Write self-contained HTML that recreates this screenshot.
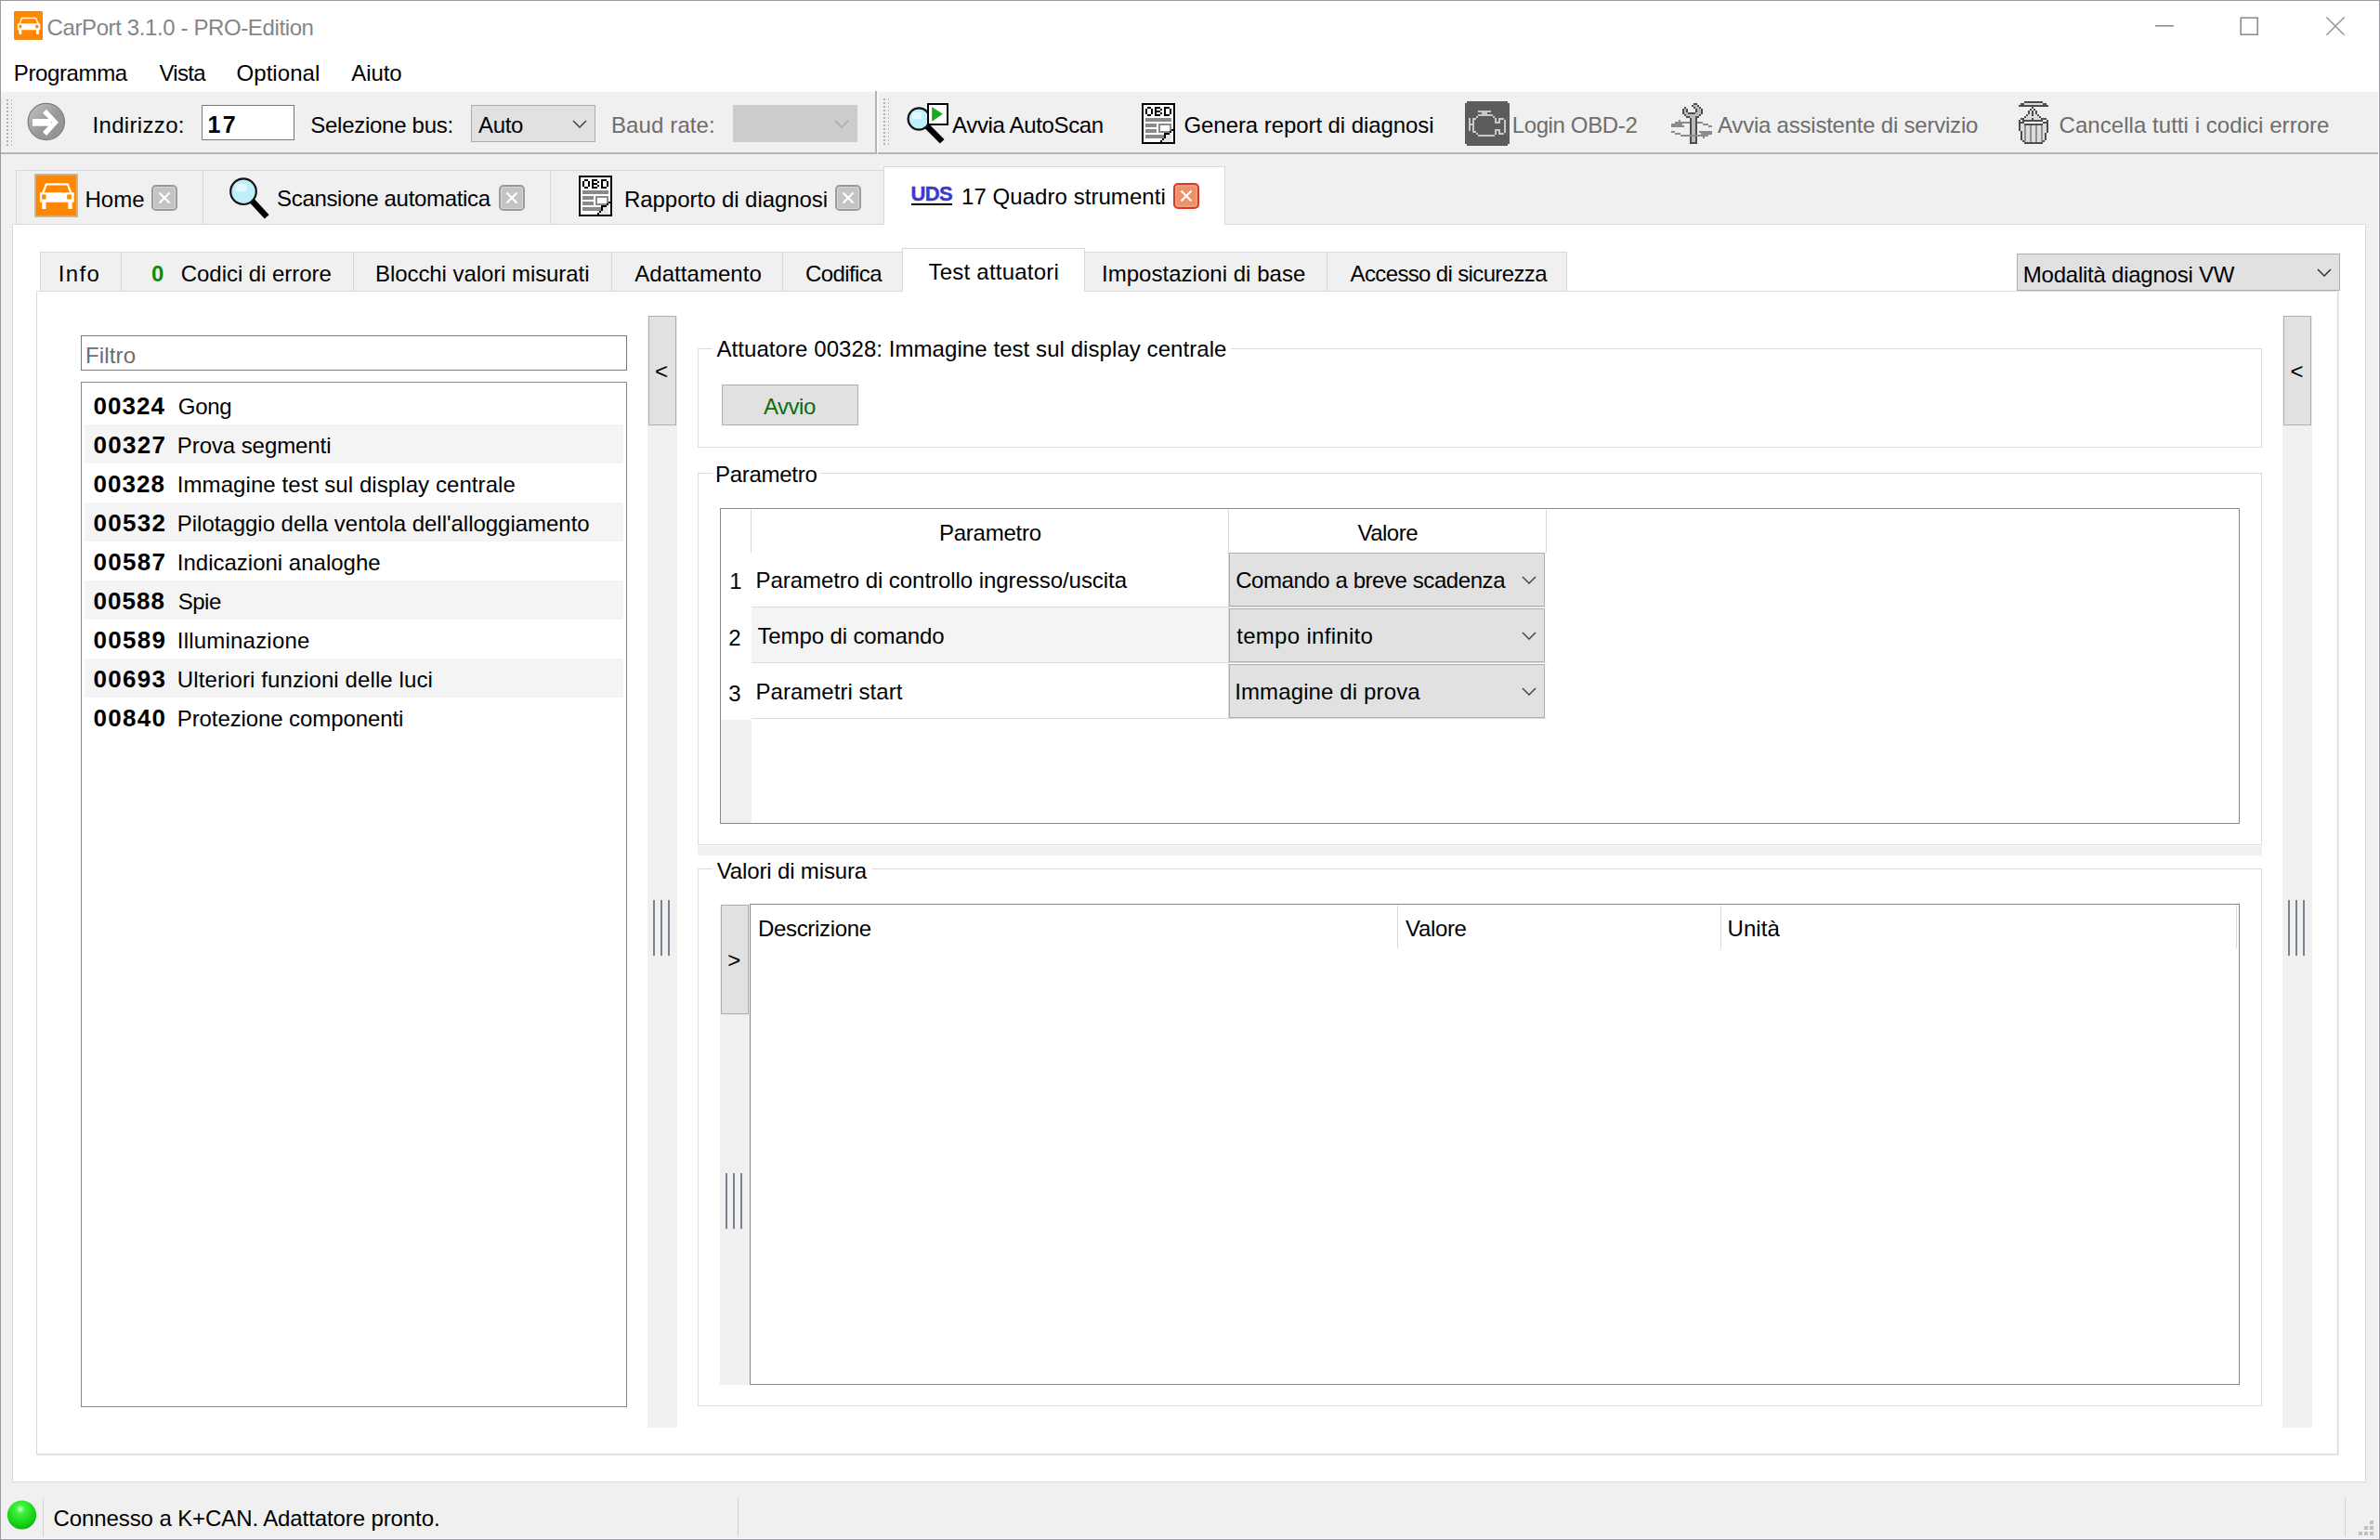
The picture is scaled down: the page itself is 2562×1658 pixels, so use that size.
<!DOCTYPE html>
<html><head><meta charset="utf-8"><title>CarPort</title><style>
html,body{margin:0;padding:0;}
body{width:2562px;height:1658px;position:relative;overflow:hidden;background:#f0f0f0;font-family:"Liberation Sans",sans-serif;}
.b{position:absolute;box-sizing:border-box;}
.t{position:absolute;white-space:pre;line-height:1;font-family:"Liberation Sans",sans-serif;}
svg{position:absolute;}
</style></head><body>
<div class="b" style="left:0px;top:0px;width:2562px;height:1658px;background:#f0f0f0;border-top:1px solid #9b9ba1;border-left:1px solid #9b9ba1;border-right:1px solid #9b9ba1;border-bottom:1px solid #9b9ba1;"></div>
<div class="b" style="left:1px;top:1px;width:2560px;height:97px;background:#fff;"></div>
<svg style="position:absolute;left:2310px;top:10px" width="230" height="36" viewBox="0 0 230 36"><line x1="10" y1="17.8" x2="30" y2="17.8" stroke="#8f8f8f" stroke-width="1.6"/><rect x="102.2" y="9.2" width="18" height="18" fill="none" stroke="#8f8f8f" stroke-width="1.6"/><path d="M194.4,8.5 L213.6,27.7 M213.6,8.5 L194.4,27.7" stroke="#999" stroke-width="1.6"/></svg>
<svg style="position:absolute;left:15px;top:12px" width="31" height="31" viewBox="0 0 46 46">
<rect x="0.8" y="0.8" width="44.4" height="44.4" fill="#ff8800" stroke="#e08a30" stroke-width="1.6" rx="1.5"/>
<path d="M11.8,10 L35.8,10 L39.5,19.8 L41.8,19.8 L41.8,30 L39.8,30 L39.8,37.2 L35.6,37.2 L35.6,30 L12.2,30 L12.2,37.2 L8,37.2 L8,30 L5.8,30 L5.8,19.8 L8.2,19.8 Z" fill="#fff"/>
<path d="M13.2,12.2 L34.4,12.2 L37.2,19.8 L10.5,19.8 Z" fill="#ff8800"/>
<rect x="8" y="22" width="4.2" height="5" fill="#ff8800"/>
<rect x="34.5" y="22" width="4.5" height="5" fill="#ff8800"/>
</svg>
<div class="b" style="left:1px;top:98px;width:943px;height:68px;background:#f0f0f0;"></div>
<div class="b" style="left:1px;top:98px;width:941px;height:1px;background:#fafafa;"></div>
<div class="b" style="left:942px;top:98px;width:2px;height:68px;background:#b4b4b4;"></div>
<div class="b" style="left:1px;top:164px;width:943px;height:2px;background:#b4b4b4;"></div>
<div class="b" style="left:944px;top:98px;width:1617px;height:68px;background:#f0f0f0;"></div>
<div class="b" style="left:944px;top:98px;width:1617px;height:1px;background:#fafafa;"></div>
<div class="b" style="left:944px;top:98px;width:2px;height:66px;background:#fafafa;"></div>
<div class="b" style="left:945px;top:164px;width:1616px;height:2px;background:#b4b4b4;"></div>
<div class="b" style="left:7px;top:107px;width:2px;height:2px;background:#b2b2b2"></div><div class="b" style="left:12px;top:107px;width:1px;height:2px;background:#bdbdbd"></div><div class="b" style="left:7px;top:111px;width:2px;height:2px;background:#b2b2b2"></div><div class="b" style="left:12px;top:111px;width:1px;height:2px;background:#bdbdbd"></div><div class="b" style="left:7px;top:115px;width:2px;height:2px;background:#b2b2b2"></div><div class="b" style="left:12px;top:115px;width:1px;height:2px;background:#bdbdbd"></div><div class="b" style="left:7px;top:119px;width:2px;height:2px;background:#b2b2b2"></div><div class="b" style="left:12px;top:119px;width:1px;height:2px;background:#bdbdbd"></div><div class="b" style="left:7px;top:123px;width:2px;height:2px;background:#b2b2b2"></div><div class="b" style="left:12px;top:123px;width:1px;height:2px;background:#bdbdbd"></div><div class="b" style="left:7px;top:127px;width:2px;height:2px;background:#b2b2b2"></div><div class="b" style="left:12px;top:127px;width:1px;height:2px;background:#bdbdbd"></div><div class="b" style="left:7px;top:131px;width:2px;height:2px;background:#b2b2b2"></div><div class="b" style="left:12px;top:131px;width:1px;height:2px;background:#bdbdbd"></div><div class="b" style="left:7px;top:135px;width:2px;height:2px;background:#b2b2b2"></div><div class="b" style="left:12px;top:135px;width:1px;height:2px;background:#bdbdbd"></div><div class="b" style="left:7px;top:139px;width:2px;height:2px;background:#b2b2b2"></div><div class="b" style="left:12px;top:139px;width:1px;height:2px;background:#bdbdbd"></div><div class="b" style="left:7px;top:143px;width:2px;height:2px;background:#b2b2b2"></div><div class="b" style="left:12px;top:143px;width:1px;height:2px;background:#bdbdbd"></div><div class="b" style="left:7px;top:147px;width:2px;height:2px;background:#b2b2b2"></div><div class="b" style="left:12px;top:147px;width:1px;height:2px;background:#bdbdbd"></div><div class="b" style="left:7px;top:151px;width:2px;height:2px;background:#b2b2b2"></div><div class="b" style="left:12px;top:151px;width:1px;height:2px;background:#bdbdbd"></div><div class="b" style="left:7px;top:155px;width:2px;height:2px;background:#b2b2b2"></div><div class="b" style="left:12px;top:155px;width:1px;height:2px;background:#bdbdbd"></div>
<div class="b" style="left:951px;top:106px;width:2px;height:2px;background:#b2b2b2"></div><div class="b" style="left:956px;top:106px;width:1px;height:2px;background:#bdbdbd"></div><div class="b" style="left:951px;top:110px;width:2px;height:2px;background:#b2b2b2"></div><div class="b" style="left:956px;top:110px;width:1px;height:2px;background:#bdbdbd"></div><div class="b" style="left:951px;top:114px;width:2px;height:2px;background:#b2b2b2"></div><div class="b" style="left:956px;top:114px;width:1px;height:2px;background:#bdbdbd"></div><div class="b" style="left:951px;top:118px;width:2px;height:2px;background:#b2b2b2"></div><div class="b" style="left:956px;top:118px;width:1px;height:2px;background:#bdbdbd"></div><div class="b" style="left:951px;top:122px;width:2px;height:2px;background:#b2b2b2"></div><div class="b" style="left:956px;top:122px;width:1px;height:2px;background:#bdbdbd"></div><div class="b" style="left:951px;top:126px;width:2px;height:2px;background:#b2b2b2"></div><div class="b" style="left:956px;top:126px;width:1px;height:2px;background:#bdbdbd"></div><div class="b" style="left:951px;top:130px;width:2px;height:2px;background:#b2b2b2"></div><div class="b" style="left:956px;top:130px;width:1px;height:2px;background:#bdbdbd"></div><div class="b" style="left:951px;top:134px;width:2px;height:2px;background:#b2b2b2"></div><div class="b" style="left:956px;top:134px;width:1px;height:2px;background:#bdbdbd"></div><div class="b" style="left:951px;top:138px;width:2px;height:2px;background:#b2b2b2"></div><div class="b" style="left:956px;top:138px;width:1px;height:2px;background:#bdbdbd"></div><div class="b" style="left:951px;top:142px;width:2px;height:2px;background:#b2b2b2"></div><div class="b" style="left:956px;top:142px;width:1px;height:2px;background:#bdbdbd"></div><div class="b" style="left:951px;top:146px;width:2px;height:2px;background:#b2b2b2"></div><div class="b" style="left:956px;top:146px;width:1px;height:2px;background:#bdbdbd"></div><div class="b" style="left:951px;top:150px;width:2px;height:2px;background:#b2b2b2"></div><div class="b" style="left:956px;top:150px;width:1px;height:2px;background:#bdbdbd"></div><div class="b" style="left:951px;top:154px;width:2px;height:2px;background:#b2b2b2"></div><div class="b" style="left:956px;top:154px;width:1px;height:2px;background:#bdbdbd"></div>
<svg style="position:absolute;left:25px;top:105px" width="50" height="50" viewBox="0 0 50 50">
<defs><linearGradient id="ag" x1="0" y1="0" x2="1" y2="1"><stop offset="0" stop-color="#c4c4c4"/><stop offset="0.55" stop-color="#989898"/><stop offset="1" stop-color="#939393"/></linearGradient></defs>
<circle cx="24.8" cy="26" r="19.6" fill="url(#ag)" stroke="#7e7e7e" stroke-width="1.3"/>
<rect x="10" y="23" width="20" height="7.7" fill="#fff"/>
<path d="M21,16.6 L25,12.7 L38,26.8 L25,41.1 L21,37 L31,26.8 Z" fill="#fff"/>
</svg>
<div class="b" style="left:217px;top:113px;width:100px;height:38px;background:#fff;border-top:1px solid #7a7a7a;border-left:1px solid #7a7a7a;border-right:1px solid #7a7a7a;border-bottom:1px solid #7a7a7a;"></div>
<div class="b" style="left:507px;top:113px;width:134px;height:40px;background:#e1e1e1;border-top:1px solid #adadad;border-left:1px solid #adadad;border-right:1px solid #adadad;border-bottom:1px solid #adadad;"></div>
<svg style="position:absolute;left:616px;top:129px" width="16" height="9" viewBox="0 0 16 9"><path d="M1,1 L8.0,8 L15,1" fill="none" stroke="#444" stroke-width="1.5"/></svg>
<div class="b" style="left:789px;top:113px;width:134px;height:40px;background:#cccccc;border-top:1px solid #cccccc;border-left:1px solid #cccccc;border-right:1px solid #cccccc;border-bottom:1px solid #cccccc;"></div>
<svg style="position:absolute;left:898px;top:129px" width="16" height="9" viewBox="0 0 16 9"><path d="M1,1 L8.0,8 L15,1" fill="none" stroke="#a9a9a9" stroke-width="1.5"/></svg>
<div style="position:absolute;left:970px;top:105px;width:55px;height:55px"><svg style="position:absolute;left:0px;top:0px" width="55" height="55" viewBox="0 0 55 55">
<line x1="28" y1="31" x2="44.2" y2="47.2" stroke="#000" stroke-width="6.5" stroke-linecap="butt"/>
<circle cx="19.2" cy="23" r="11.6" fill="#bdeefa" stroke="#111" stroke-width="2.2"/>
<rect x="12.239999999999998" y="16.04" width="9.86" height="6.96" fill="#e2f8fd"/>
</svg><svg style="position:absolute;left:0;top:0" width="55" height="55" viewBox="0 0 55 55" shape-rendering="crispEdges"><rect x="28.9" y="7" width="20.8" height="21.6" fill="#fff" stroke="#000" stroke-width="2"/><path d="M33.2,10 L44.8,17.8 L33.2,25.7 Z" fill="#1aab24" shape-rendering="geometricPrecision"/></svg></div>
<svg style="position:absolute;left:1229px;top:111px" width="36" height="44" viewBox="0 0 18 22" shape-rendering="crispEdges"><rect x="0" y="0" width="18" height="22" fill="#fff"/><rect x="2" y="8" width="14" height="2" fill="#8a8a8a"/><rect x="2" y="11" width="6" height="2" fill="#8a8a8a"/><rect x="2" y="14" width="6" height="2" fill="#8a8a8a"/><rect x="2" y="17" width="10" height="2" fill="#8a8a8a"/><rect x="9" y="11" width="7" height="1" fill="#8a8a8a"/><rect x="9" y="15" width="7" height="1" fill="#8a8a8a"/><rect x="9" y="11" width="1" height="5" fill="#8a8a8a"/><rect x="15" y="11" width="1" height="5" fill="#8a8a8a"/><rect x="13" y="16" width="3" height="1" fill="#e6e6e6"/><rect x="12" y="17" width="4" height="1" fill="#e6e6e6"/><rect x="12" y="18" width="4" height="1" fill="#e6e6e6"/><rect x="12" y="19" width="4" height="1" fill="#e6e6e6"/><rect x="11" y="20" width="5" height="1" fill="#e6e6e6"/><rect x="0" y="0" width="18" height="1" fill="#000"/><rect x="0" y="21" width="18" height="1" fill="#000"/><rect x="0" y="0" width="1" height="22" fill="#000"/><rect x="17" y="0" width="1" height="22" fill="#000"/><rect x="3" y="2" width="2" height="1" fill="#000"/><rect x="2" y="3" width="1" height="3" fill="#000"/><rect x="5" y="3" width="1" height="3" fill="#000"/><rect x="3" y="6" width="2" height="1" fill="#000"/><rect x="7" y="2" width="3" height="1" fill="#000"/><rect x="7" y="3" width="1" height="3" fill="#000"/><rect x="10" y="3" width="1" height="1" fill="#000"/><rect x="7" y="4" width="3" height="1" fill="#000"/><rect x="10" y="5" width="1" height="1" fill="#000"/><rect x="7" y="6" width="3" height="1" fill="#000"/><rect x="12" y="2" width="3" height="1" fill="#000"/><rect x="12" y="3" width="1" height="3" fill="#000"/><rect x="15" y="3" width="1" height="3" fill="#000"/><rect x="12" y="6" width="3" height="1" fill="#000"/><rect x="16" y="14" width="1" height="1" fill="#000"/><rect x="15" y="15" width="1" height="1" fill="#000"/><rect x="13" y="16" width="2" height="1" fill="#000"/><rect x="12" y="16" width="1" height="3" fill="#000"/><rect x="11" y="19" width="1" height="1" fill="#000"/><rect x="10" y="20" width="1" height="2" fill="#000"/></svg>
<svg style="position:absolute;left:1577px;top:109px" width="48" height="48" viewBox="0 0 24 24" shape-rendering="crispEdges"><path d="M1,0 H23 V1 H24 V23 H23 V24 H1 V23 H0 V1 H1 Z" fill="#5c5c5c"/><rect x="7" y="5" width="7" height="1" fill="#c8c8c8"/><rect x="9" y="6" width="3" height="1" fill="#c8c8c8"/><rect x="7" y="7" width="8" height="1" fill="#c8c8c8"/><rect x="6" y="8" width="1" height="1" fill="#c8c8c8"/><rect x="5" y="9" width="1" height="1" fill="#c8c8c8"/><rect x="4" y="9" width="1" height="8" fill="#c8c8c8"/><rect x="5" y="16" width="1" height="1" fill="#c8c8c8"/><rect x="6" y="17" width="1" height="1" fill="#c8c8c8"/><rect x="2" y="9" width="1" height="7" fill="#c8c8c8"/><rect x="3" y="12" width="1" height="1" fill="#c8c8c8"/><rect x="7" y="18" width="9" height="1" fill="#c8c8c8"/><rect x="15" y="8" width="1" height="1" fill="#c8c8c8"/><rect x="16" y="9" width="1" height="3" fill="#c8c8c8"/><rect x="16" y="11" width="3" height="1" fill="#c8c8c8"/><rect x="18" y="9" width="1" height="3" fill="#c8c8c8"/><rect x="18" y="9" width="3" height="1" fill="#c8c8c8"/><rect x="21" y="10" width="1" height="7" fill="#c8c8c8"/><rect x="16" y="15" width="3" height="1" fill="#c8c8c8"/><rect x="16" y="15" width="1" height="3" fill="#c8c8c8"/><rect x="18" y="15" width="1" height="3" fill="#c8c8c8"/><rect x="18" y="17" width="3" height="1" fill="#c8c8c8"/></svg>
<svg style="position:absolute;left:1799px;top:111px" width="44" height="44" viewBox="0 0 22 22" shape-rendering="crispEdges"><rect x="12" y="1" width="2" height="1" fill="#bababa"/><rect x="13" y="2" width="2" height="1" fill="#bababa"/><rect x="7" y="3" width="1" height="2" fill="#bababa"/><rect x="14" y="3" width="2" height="2" fill="#bababa"/><rect x="7" y="5" width="2" height="1" fill="#bababa"/><rect x="13" y="5" width="3" height="1" fill="#bababa"/><rect x="8" y="6" width="7" height="1" fill="#bababa"/><rect x="10" y="7" width="3" height="1" fill="#bababa"/><rect x="11" y="8" width="2" height="13" fill="#bababa"/><rect x="12" y="0" width="2" height="1" fill="#4d4d4d"/><rect x="11" y="1" width="1" height="1" fill="#4d4d4d"/><rect x="14" y="1" width="1" height="1" fill="#4d4d4d"/><rect x="7" y="2" width="1" height="1" fill="#4d4d4d"/><rect x="12" y="2" width="1" height="1" fill="#4d4d4d"/><rect x="15" y="2" width="1" height="1" fill="#4d4d4d"/><rect x="6" y="3" width="1" height="2" fill="#4d4d4d"/><rect x="8" y="3" width="1" height="2" fill="#4d4d4d"/><rect x="13" y="3" width="1" height="2" fill="#4d4d4d"/><rect x="16" y="3" width="1" height="3" fill="#4d4d4d"/><rect x="6" y="5" width="1" height="1" fill="#4d4d4d"/><rect x="9" y="5" width="4" height="1" fill="#4d4d4d"/><rect x="7" y="6" width="1" height="1" fill="#4d4d4d"/><rect x="15" y="6" width="1" height="1" fill="#4d4d4d"/><rect x="8" y="7" width="2" height="1" fill="#4d4d4d"/><rect x="13" y="7" width="2" height="1" fill="#4d4d4d"/><rect x="10" y="8" width="1" height="13" fill="#4d4d4d"/><rect x="13" y="8" width="1" height="13" fill="#4d4d4d"/><rect x="10" y="21" width="4" height="1" fill="#4d4d4d"/><rect x="4" y="9" width="1" height="1" fill="#8c8c8c"/><rect x="2" y="10" width="8" height="1" fill="#8c8c8c"/><rect x="14" y="10" width="3" height="1" fill="#8c8c8c"/><rect x="0" y="11" width="6" height="1" fill="#8c8c8c"/><rect x="17" y="11" width="3" height="1" fill="#8c8c8c"/><rect x="0" y="12" width="7" height="1" fill="#8c8c8c"/><rect x="20" y="12" width="2" height="1" fill="#8c8c8c"/><rect x="0" y="15" width="2" height="1" fill="#8c8c8c"/><rect x="15" y="15" width="7" height="1" fill="#8c8c8c"/><rect x="2" y="16" width="3" height="1" fill="#8c8c8c"/><rect x="16" y="16" width="6" height="1" fill="#8c8c8c"/><rect x="5" y="17" width="15" height="1" fill="#8c8c8c"/><rect x="17" y="18" width="1" height="1" fill="#8c8c8c"/></svg>
<svg style="position:absolute;left:2173px;top:109px" width="32" height="46" viewBox="0 0 16 23" shape-rendering="crispEdges"><rect x="3" y="1" width="10" height="1" fill="#dcdcdc"/><rect x="6" y="5" width="1" height="2" fill="#dcdcdc"/><rect x="8" y="5" width="1" height="2" fill="#dcdcdc"/><rect x="5" y="7" width="2" height="1" fill="#dcdcdc"/><rect x="8" y="7" width="2" height="1" fill="#dcdcdc"/><rect x="4" y="8" width="7" height="1" fill="#dcdcdc"/><rect x="3" y="9" width="4" height="1" fill="#dcdcdc"/><rect x="8" y="9" width="4" height="1" fill="#dcdcdc"/><rect x="1" y="12" width="2" height="1" fill="#dcdcdc"/><rect x="13" y="12" width="2" height="1" fill="#dcdcdc"/><rect x="1" y="13" width="14" height="8" fill="#dcdcdc"/><rect x="2" y="21" width="11" height="1" fill="#dcdcdc"/><rect x="7" y="4" width="1" height="1" fill="#ffffff"/><rect x="1" y="10" width="1" height="1" fill="#ffffff"/><rect x="13" y="10" width="2" height="1" fill="#ffffff"/><rect x="3" y="11" width="10" height="1" fill="#ffffff"/><rect x="3" y="13" width="1" height="9" fill="#909090"/><rect x="6" y="13" width="1" height="9" fill="#909090"/><rect x="9" y="13" width="1" height="9" fill="#909090"/><rect x="12" y="13" width="1" height="9" fill="#909090"/><rect x="3" y="0" width="10" height="1" fill="#4d4d4d"/><rect x="1" y="1" width="2" height="1" fill="#4d4d4d"/><rect x="13" y="1" width="2" height="1" fill="#4d4d4d"/><rect x="0" y="2" width="16" height="1" fill="#4d4d4d"/><rect x="7" y="3" width="1" height="1" fill="#4d4d4d"/><rect x="6" y="4" width="1" height="1" fill="#4d4d4d"/><rect x="8" y="4" width="1" height="1" fill="#4d4d4d"/><rect x="5" y="5" width="1" height="2" fill="#4d4d4d"/><rect x="7" y="5" width="1" height="3" fill="#4d4d4d"/><rect x="9" y="5" width="1" height="2" fill="#4d4d4d"/><rect x="4" y="7" width="1" height="1" fill="#4d4d4d"/><rect x="10" y="7" width="1" height="1" fill="#4d4d4d"/><rect x="3" y="8" width="1" height="1" fill="#4d4d4d"/><rect x="11" y="8" width="1" height="1" fill="#4d4d4d"/><rect x="1" y="9" width="2" height="1" fill="#4d4d4d"/><rect x="7" y="9" width="1" height="1" fill="#4d4d4d"/><rect x="12" y="9" width="3" height="1" fill="#4d4d4d"/><rect x="0" y="10" width="1" height="6" fill="#4d4d4d"/><rect x="2" y="10" width="11" height="1" fill="#4d4d4d"/><rect x="15" y="10" width="1" height="7" fill="#4d4d4d"/><rect x="1" y="11" width="2" height="1" fill="#4d4d4d"/><rect x="13" y="11" width="3" height="1" fill="#4d4d4d"/><rect x="3" y="12" width="10" height="1" fill="#4d4d4d"/><rect x="1" y="16" width="1" height="5" fill="#4d4d4d"/><rect x="14" y="17" width="1" height="4" fill="#4d4d4d"/><rect x="2" y="21" width="1" height="1" fill="#4d4d4d"/><rect x="13" y="21" width="1" height="1" fill="#4d4d4d"/><rect x="3" y="22" width="10" height="1" fill="#4d4d4d"/></svg>
<div class="b" style="left:17px;top:183px;width:934px;height:1px;background:#d9d9d9;"></div>
<div class="b" style="left:17px;top:183px;width:1px;height:59px;background:#d9d9d9;"></div>
<div class="b" style="left:218px;top:184px;width:1px;height:58px;background:#d9d9d9;"></div>
<div class="b" style="left:592px;top:184px;width:1px;height:58px;background:#d9d9d9;"></div>
<div class="b" style="left:13px;top:241px;width:2534px;height:1355px;background:#fff;border-top:1px solid #d9d9d9;border-left:1px solid #d9d9d9;border-right:1px solid #d9d9d9;border-bottom:1px solid #d9d9d9;"></div>
<div class="b" style="left:951px;top:179px;width:368px;height:63px;background:#fff;border-top:1px solid #d9d9d9;border-left:1px solid #d9d9d9;border-right:1px solid #d9d9d9;"></div>
<div class="b" style="left:952px;top:241px;width:366px;height:2px;background:#fff;"></div>
<svg style="position:absolute;left:37px;top:187px" width="47" height="47" viewBox="0 0 46 46">
<rect x="0.8" y="0.8" width="44.4" height="44.4" fill="#ff8800" stroke="#cdb9a0" stroke-width="1.6" />
<path d="M11.8,10 L35.8,10 L39.5,19.8 L41.8,19.8 L41.8,30 L39.8,30 L39.8,37.2 L35.6,37.2 L35.6,30 L12.2,30 L12.2,37.2 L8,37.2 L8,30 L5.8,30 L5.8,19.8 L8.2,19.8 Z" fill="#fff"/>
<path d="M13.2,12.2 L34.4,12.2 L37.2,19.8 L10.5,19.8 Z" fill="#ff8800"/>
<rect x="8" y="22" width="4.2" height="5" fill="#ff8800"/>
<rect x="34.5" y="22" width="4.5" height="5" fill="#ff8800"/>
</svg>
<svg style="position:absolute;left:240px;top:186px" width="54" height="54" viewBox="0 0 54 54">
<line x1="32" y1="31" x2="45" y2="45" stroke="#000" stroke-width="6.5" stroke-linecap="square"/>
<circle cx="22" cy="20.2" r="13.8" fill="#bdeefa" stroke="#111" stroke-width="2.2"/>
<rect x="13.72" y="11.92" width="11.73" height="8.28" fill="#e2f8fd"/>
</svg>
<svg style="position:absolute;left:623px;top:189px" width="36" height="44" viewBox="0 0 18 22" shape-rendering="crispEdges"><rect x="0" y="0" width="18" height="22" fill="#fff"/><rect x="2" y="8" width="14" height="2" fill="#8a8a8a"/><rect x="2" y="11" width="6" height="2" fill="#8a8a8a"/><rect x="2" y="14" width="6" height="2" fill="#8a8a8a"/><rect x="2" y="17" width="10" height="2" fill="#8a8a8a"/><rect x="9" y="11" width="7" height="1" fill="#8a8a8a"/><rect x="9" y="15" width="7" height="1" fill="#8a8a8a"/><rect x="9" y="11" width="1" height="5" fill="#8a8a8a"/><rect x="15" y="11" width="1" height="5" fill="#8a8a8a"/><rect x="13" y="16" width="3" height="1" fill="#e6e6e6"/><rect x="12" y="17" width="4" height="1" fill="#e6e6e6"/><rect x="12" y="18" width="4" height="1" fill="#e6e6e6"/><rect x="12" y="19" width="4" height="1" fill="#e6e6e6"/><rect x="11" y="20" width="5" height="1" fill="#e6e6e6"/><rect x="0" y="0" width="18" height="1" fill="#000"/><rect x="0" y="21" width="18" height="1" fill="#000"/><rect x="0" y="0" width="1" height="22" fill="#000"/><rect x="17" y="0" width="1" height="22" fill="#000"/><rect x="3" y="2" width="2" height="1" fill="#000"/><rect x="2" y="3" width="1" height="3" fill="#000"/><rect x="5" y="3" width="1" height="3" fill="#000"/><rect x="3" y="6" width="2" height="1" fill="#000"/><rect x="7" y="2" width="3" height="1" fill="#000"/><rect x="7" y="3" width="1" height="3" fill="#000"/><rect x="10" y="3" width="1" height="1" fill="#000"/><rect x="7" y="4" width="3" height="1" fill="#000"/><rect x="10" y="5" width="1" height="1" fill="#000"/><rect x="7" y="6" width="3" height="1" fill="#000"/><rect x="12" y="2" width="3" height="1" fill="#000"/><rect x="12" y="3" width="1" height="3" fill="#000"/><rect x="15" y="3" width="1" height="3" fill="#000"/><rect x="12" y="6" width="3" height="1" fill="#000"/><rect x="16" y="14" width="1" height="1" fill="#000"/><rect x="15" y="15" width="1" height="1" fill="#000"/><rect x="13" y="16" width="2" height="1" fill="#000"/><rect x="12" y="16" width="1" height="3" fill="#000"/><rect x="11" y="19" width="1" height="1" fill="#000"/><rect x="10" y="20" width="1" height="2" fill="#000"/></svg>
<svg style="position:absolute;left:163px;top:199px" width="28" height="28" viewBox="0 0 28 28">
<rect x="1" y="1" width="26" height="26" rx="4" fill="#c4c4c4" stroke="#999" stroke-width="2"/>
<rect x="2.5" y="2.5" width="23" height="23" rx="2.5" fill="none" stroke="#d4d4d4" stroke-width="1.2"/>
<path d="M8.5,8.5 L19.5,19.5 M19.5,8.5 L8.5,19.5" stroke="#fff" stroke-width="2.2"/>
</svg>
<svg style="position:absolute;left:537px;top:199px" width="28" height="28" viewBox="0 0 28 28">
<rect x="1" y="1" width="26" height="26" rx="4" fill="#c4c4c4" stroke="#999" stroke-width="2"/>
<rect x="2.5" y="2.5" width="23" height="23" rx="2.5" fill="none" stroke="#d4d4d4" stroke-width="1.2"/>
<path d="M8.5,8.5 L19.5,19.5 M19.5,8.5 L8.5,19.5" stroke="#fff" stroke-width="2.2"/>
</svg>
<svg style="position:absolute;left:899px;top:199px" width="28" height="28" viewBox="0 0 28 28">
<rect x="1" y="1" width="26" height="26" rx="4" fill="#c4c4c4" stroke="#999" stroke-width="2"/>
<rect x="2.5" y="2.5" width="23" height="23" rx="2.5" fill="none" stroke="#d4d4d4" stroke-width="1.2"/>
<path d="M8.5,8.5 L19.5,19.5 M19.5,8.5 L8.5,19.5" stroke="#fff" stroke-width="2.2"/>
</svg>
<svg style="position:absolute;left:1263px;top:197px" width="28" height="28" viewBox="0 0 28 28">
<rect x="1" y="1" width="26" height="26" rx="4" fill="#ee9068" stroke="#d8392b" stroke-width="2"/>
<rect x="3" y="3" width="22" height="22" rx="2" fill="none" stroke="#f2ae90" stroke-width="1"/>
<path d="M8.5,8.5 L19.5,19.5 M19.5,8.5 L8.5,19.5" stroke="#fff" stroke-width="2.2"/>
</svg>
<div class="t" style="left:980.5px;top:197.6px;font-size:22px;font-weight:700;color:#3a3ad0;letter-spacing:-0.6px;-webkit-text-stroke:0.4px #3a3ad0">UDS</div>
<div class="b" style="left:981px;top:219px;width:44px;height:2px;background:#000;"></div>
<div class="b" style="left:43px;top:271px;width:1644px;height:43px;background:#f0f0f0;"></div>
<div class="b" style="left:43px;top:271px;width:1644px;height:1px;background:#d9d9d9;"></div>
<div class="b" style="left:43px;top:271px;width:1px;height:43px;background:#d9d9d9;"></div>
<div class="b" style="left:130px;top:272px;width:1px;height:42px;background:#d9d9d9;"></div>
<div class="b" style="left:380px;top:272px;width:1px;height:42px;background:#d9d9d9;"></div>
<div class="b" style="left:658px;top:272px;width:1px;height:42px;background:#d9d9d9;"></div>
<div class="b" style="left:842px;top:272px;width:1px;height:42px;background:#d9d9d9;"></div>
<div class="b" style="left:1428px;top:272px;width:1px;height:42px;background:#d9d9d9;"></div>
<div class="b" style="left:1686px;top:272px;width:1px;height:42px;background:#d9d9d9;"></div>
<div class="b" style="left:39px;top:313px;width:2478px;height:1253px;background:#fff;border-top:1px solid #d9d9d9;border-left:1px solid #d9d9d9;border-right:1px solid #d9d9d9;border-bottom:1px solid #d9d9d9;"></div>
<div class="b" style="left:2517px;top:314px;width:1px;height:1253px;background:#ececec;"></div>
<div class="b" style="left:40px;top:1566px;width:2478px;height:1px;background:#ececec;"></div>
<div class="b" style="left:971px;top:267px;width:197px;height:47px;background:#fff;border-top:1px solid #d9d9d9;border-left:1px solid #d9d9d9;border-right:1px solid #d9d9d9;"></div>
<div class="b" style="left:972px;top:313px;width:195px;height:2px;background:#fff;"></div>
<div class="b" style="left:2171px;top:273px;width:348px;height:40px;background:#e1e1e1;border-top:1px solid #adadad;border-left:1px solid #adadad;border-right:1px solid #adadad;border-bottom:1px solid #adadad;"></div>
<svg style="position:absolute;left:2494px;top:289px" width="16" height="9" viewBox="0 0 16 9"><path d="M1,1 L8.0,8 L15,1" fill="none" stroke="#333" stroke-width="1.5"/></svg>
<div class="b" style="left:87px;top:361px;width:588px;height:38px;background:#fff;border-top:1px solid #7a7a7a;border-left:1px solid #7a7a7a;border-right:1px solid #7a7a7a;border-bottom:1px solid #7a7a7a;"></div>
<div class="b" style="left:87px;top:411px;width:588px;height:1104px;background:#fff;border-top:1px solid #828790;border-left:1px solid #828790;border-right:1px solid #828790;border-bottom:1px solid #828790;"></div>
<div class="b" style="left:91px;top:457px;width:580px;height:42px;background:#f4f4f4;"></div>
<div class="b" style="left:91px;top:541px;width:580px;height:42px;background:#f4f4f4;"></div>
<div class="b" style="left:91px;top:625px;width:580px;height:42px;background:#f4f4f4;"></div>
<div class="b" style="left:91px;top:709px;width:580px;height:42px;background:#f4f4f4;"></div>
<div class="b" style="left:697px;top:340px;width:32px;height:1197px;background:#f0f0f0;"></div>
<div class="b" style="left:698px;top:340px;width:30px;height:118px;background:#e1e1e1;border-top:1px solid #adadad;border-left:1px solid #adadad;border-right:1px solid #adadad;border-bottom:1px solid #adadad;"></div>
<div class="b" style="left:2457px;top:340px;width:32px;height:1197px;background:#f0f0f0;"></div>
<div class="b" style="left:2458px;top:340px;width:30px;height:118px;background:#e1e1e1;border-top:1px solid #adadad;border-left:1px solid #adadad;border-right:1px solid #adadad;border-bottom:1px solid #adadad;"></div>
<div class="b" style="left:703px;top:969px;width:2px;height:60px;background:#7b8290;"></div>
<div class="b" style="left:711px;top:969px;width:2px;height:60px;background:#7b8290;"></div>
<div class="b" style="left:719px;top:969px;width:2px;height:60px;background:#7b8290;"></div>
<div class="b" style="left:2463px;top:969px;width:2px;height:60px;background:#7b8290;"></div>
<div class="b" style="left:2471px;top:969px;width:2px;height:60px;background:#7b8290;"></div>
<div class="b" style="left:2479px;top:969px;width:2px;height:60px;background:#7b8290;"></div>
<div class="b" style="left:751px;top:375px;width:1684px;height:107px;background:#fff;border-top:1px solid #dcdcdc;border-left:1px solid #dcdcdc;border-right:1px solid #dcdcdc;border-bottom:1px solid #dcdcdc;"></div>
<div class="b" style="left:767px;top:375px;width:558px;height:1px;background:#fff;"></div>
<div class="b" style="left:751px;top:509px;width:1684px;height:401px;background:#fff;border-top:1px solid #dcdcdc;border-left:1px solid #dcdcdc;border-right:1px solid #dcdcdc;border-bottom:1px solid #dcdcdc;"></div>
<div class="b" style="left:767px;top:509px;width:116px;height:1px;background:#fff;"></div>
<div class="b" style="left:751px;top:911px;width:1684px;height:10px;background:#f0f0f0;"></div>
<div class="b" style="left:751px;top:935px;width:1684px;height:579px;background:#fff;border-top:1px solid #dcdcdc;border-left:1px solid #dcdcdc;border-right:1px solid #dcdcdc;border-bottom:1px solid #dcdcdc;"></div>
<div class="b" style="left:767px;top:935px;width:172px;height:1px;background:#fff;"></div>
<div class="b" style="left:777px;top:414px;width:147px;height:44px;background:#e1e1e1;border-top:1px solid #adadad;border-left:1px solid #adadad;border-right:1px solid #adadad;border-bottom:1px solid #adadad;"></div>
<div class="b" style="left:775px;top:547px;width:1636px;height:340px;background:#fff;border-top:1px solid #828790;border-left:1px solid #828790;border-right:1px solid #828790;border-bottom:1px solid #828790;"></div>
<div class="b" style="left:808px;top:549px;width:1px;height:46px;background:#d9d9d9;"></div>
<div class="b" style="left:1322px;top:549px;width:1px;height:225px;background:#d9d9d9;"></div>
<div class="b" style="left:1664px;top:549px;width:1px;height:46px;background:#d9d9d9;"></div>
<div class="b" style="left:776px;top:775px;width:33px;height:111px;background:#f0f0f0;"></div>
<div class="b" style="left:809px;top:654px;width:513px;height:60px;background:#f4f4f4;"></div>
<div class="b" style="left:809px;top:653px;width:856px;height:1px;background:#dcdcdc;"></div>
<div class="b" style="left:809px;top:713px;width:856px;height:1px;background:#dcdcdc;"></div>
<div class="b" style="left:809px;top:773px;width:856px;height:1px;background:#dcdcdc;"></div>
<div class="b" style="left:1323px;top:595px;width:340px;height:58px;background:#e1e1e1;border-top:1px solid #adadad;border-left:1px solid #adadad;border-right:1px solid #adadad;border-bottom:1px solid #adadad;"></div>
<svg style="position:absolute;left:1638px;top:620px" width="16" height="9" viewBox="0 0 16 9"><path d="M1,1 L8.0,8 L15,1" fill="none" stroke="#444" stroke-width="1.5"/></svg>
<div class="b" style="left:1323px;top:655px;width:340px;height:58px;background:#e1e1e1;border-top:1px solid #adadad;border-left:1px solid #adadad;border-right:1px solid #adadad;border-bottom:1px solid #adadad;"></div>
<svg style="position:absolute;left:1638px;top:680px" width="16" height="9" viewBox="0 0 16 9"><path d="M1,1 L8.0,8 L15,1" fill="none" stroke="#444" stroke-width="1.5"/></svg>
<div class="b" style="left:1323px;top:715px;width:340px;height:58px;background:#e1e1e1;border-top:1px solid #adadad;border-left:1px solid #adadad;border-right:1px solid #adadad;border-bottom:1px solid #adadad;"></div>
<svg style="position:absolute;left:1638px;top:740px" width="16" height="9" viewBox="0 0 16 9"><path d="M1,1 L8.0,8 L15,1" fill="none" stroke="#444" stroke-width="1.5"/></svg>
<div class="b" style="left:807px;top:973px;width:1604px;height:518px;background:#fff;border-top:1px solid #828790;border-left:1px solid #828790;border-right:1px solid #828790;border-bottom:1px solid #828790;"></div>
<div class="b" style="left:1504px;top:975px;width:1px;height:46px;background:#d9d9d9;"></div>
<div class="b" style="left:1852px;top:975px;width:1px;height:46px;background:#d9d9d9;"></div>
<div class="b" style="left:2407px;top:975px;width:1px;height:46px;background:#d9d9d9;"></div>
<div class="b" style="left:775px;top:974px;width:32px;height:517px;background:#f0f0f0;"></div>
<div class="b" style="left:776px;top:974px;width:30px;height:118px;background:#e1e1e1;border-top:1px solid #adadad;border-left:1px solid #adadad;border-right:1px solid #adadad;border-bottom:1px solid #adadad;"></div>
<div class="b" style="left:781px;top:1263px;width:2px;height:60px;background:#7b8290;"></div>
<div class="b" style="left:789px;top:1263px;width:2px;height:60px;background:#7b8290;"></div>
<div class="b" style="left:797px;top:1263px;width:2px;height:60px;background:#7b8290;"></div>
<div class="b" style="left:46px;top:1613px;width:1px;height:41px;background:#d0d0d0;"></div>
<div class="b" style="left:794px;top:1613px;width:1px;height:41px;background:#d0d0d0;"></div>
<div class="b" style="left:2524px;top:1613px;width:1px;height:41px;background:#d0d0d0;"></div>
<svg style="position:absolute;left:6px;top:1613px" width="36" height="36" viewBox="0 0 36 36"><defs><radialGradient id="gb" cx="0.45" cy="0.3" r="0.7"><stop offset="0" stop-color="#d8ffd8"/><stop offset="0.22" stop-color="#3cf53c"/><stop offset="0.7" stop-color="#18d418"/><stop offset="1" stop-color="#10b810"/></radialGradient></defs><circle cx="17.5" cy="18" r="15.6" fill="url(#gb)"/></svg>
<div class="b" style="left:2551px;top:1637px;width:4px;height:4px;background:#c0c0c0"></div><div class="b" style="left:2545px;top:1643px;width:4px;height:4px;background:#c0c0c0"></div><div class="b" style="left:2551px;top:1643px;width:4px;height:4px;background:#c0c0c0"></div><div class="b" style="left:2539px;top:1649px;width:4px;height:4px;background:#c0c0c0"></div><div class="b" style="left:2545px;top:1649px;width:4px;height:4px;background:#c0c0c0"></div><div class="b" style="left:2551px;top:1649px;width:4px;height:4px;background:#c0c0c0"></div>
<div class="b" style="left:2560px;top:1px;width:1px;height:1656px;background:#f8f8f8;"></div>
<div class="b" style="left:1px;top:1656px;width:2560px;height:1px;background:#f8f8f8;"></div>
<div class="t" style="left:50.50px;top:18.00px;font-size:24px;font-weight:400;color:#858585;letter-spacing:-0.385px;">CarPort 3.1.0 - PRO-Edition</div>
<div class="t" style="left:14.80px;top:67.00px;font-size:24px;font-weight:400;color:#000;letter-spacing:-0.375px;">Programma</div>
<div class="t" style="left:171.40px;top:67.00px;font-size:24px;font-weight:400;color:#000;letter-spacing:-0.650px;">Vista</div>
<div class="t" style="left:254.50px;top:67.00px;font-size:24px;font-weight:400;color:#000;letter-spacing:0.057px;">Optional</div>
<div class="t" style="left:378.20px;top:67.00px;font-size:24px;font-weight:400;color:#000;letter-spacing:-0.050px;">Aiuto</div>
<div class="t" style="left:99.50px;top:123.00px;font-size:24px;font-weight:400;color:#000;letter-spacing:0.333px;">Indirizzo:</div>
<div class="t" style="left:223.40px;top:122.00px;font-size:25px;font-weight:700;color:#000;letter-spacing:2.500px;">17</div>
<div class="t" style="left:334.30px;top:123.00px;font-size:24px;font-weight:400;color:#000;letter-spacing:-0.277px;">Selezione bus:</div>
<div class="t" style="left:515.00px;top:123.00px;font-size:24px;font-weight:400;color:#000;letter-spacing:-0.333px;">Auto</div>
<div class="t" style="left:658.00px;top:123.00px;font-size:24px;font-weight:400;color:#6d6d6d;letter-spacing:0.111px;">Baud rate:</div>
<div class="t" style="left:1025.00px;top:123.00px;font-size:24px;font-weight:400;color:#000;letter-spacing:-0.346px;">Avvia AutoScan</div>
<div class="t" style="left:1274.50px;top:123.00px;font-size:24px;font-weight:400;color:#000;letter-spacing:-0.071px;">Genera report di diagnosi</div>
<div class="t" style="left:1627.70px;top:123.00px;font-size:24px;font-weight:400;color:#6d6d6d;letter-spacing:-0.370px;">Login OBD-2</div>
<div class="t" style="left:1849.00px;top:123.00px;font-size:24px;font-weight:400;color:#6d6d6d;letter-spacing:-0.222px;">Avvia assistente di servizio</div>
<div class="t" style="left:2216.50px;top:123.00px;font-size:24px;font-weight:400;color:#6d6d6d;letter-spacing:0.052px;">Cancella tutti i codici errore</div>
<div class="t" style="left:91.50px;top:203.00px;font-size:24px;font-weight:400;color:#000;letter-spacing:0.000px;">Home</div>
<div class="t" style="left:298.00px;top:202.00px;font-size:24px;font-weight:400;color:#000;letter-spacing:-0.316px;">Scansione automatica</div>
<div class="t" style="left:672.00px;top:203.00px;font-size:24px;font-weight:400;color:#000;letter-spacing:-0.053px;">Rapporto di diagnosi</div>
<div class="t" style="left:1035.00px;top:200.00px;font-size:24px;font-weight:400;color:#000;letter-spacing:0.056px;">17 Quadro strumenti</div>
<div class="t" style="left:62.70px;top:283.00px;font-size:24px;font-weight:400;color:#000;letter-spacing:1.400px;">Info</div>
<div class="t" style="left:162.90px;top:283.00px;font-size:24px;font-weight:700;color:#0e8a0e;letter-spacing:0.000px;">0</div>
<div class="t" style="left:194.80px;top:283.00px;font-size:24px;font-weight:400;color:#000;letter-spacing:-0.053px;">Codici di errore</div>
<div class="t" style="left:404.00px;top:283.00px;font-size:24px;font-weight:400;color:#000;letter-spacing:-0.073px;">Blocchi valori misurati</div>
<div class="t" style="left:683.30px;top:283.00px;font-size:24px;font-weight:400;color:#000;letter-spacing:0.040px;">Adattamento</div>
<div class="t" style="left:866.90px;top:283.00px;font-size:24px;font-weight:400;color:#000;letter-spacing:-0.586px;">Codifica</div>
<div class="t" style="left:999.50px;top:281.00px;font-size:24px;font-weight:400;color:#000;letter-spacing:0.231px;">Test attuatori</div>
<div class="t" style="left:1186.00px;top:283.00px;font-size:24px;font-weight:400;color:#000;letter-spacing:0.026px;">Impostazioni di base</div>
<div class="t" style="left:1453.60px;top:283.00px;font-size:24px;font-weight:400;color:#000;letter-spacing:-0.642px;">Accesso di sicurezza</div>
<div class="t" style="left:2177.80px;top:284.00px;font-size:24px;font-weight:400;color:#000;letter-spacing:-0.237px;">Modalità diagnosi VW</div>
<div class="t" style="left:92.00px;top:371.00px;font-size:24px;font-weight:400;color:#6d6d6d;letter-spacing:0.140px;">Filtro</div>
<div class="t" style="left:100.60px;top:424.00px;font-size:26px;font-weight:700;color:#000;letter-spacing:1.000px;">00324</div>
<div class="t" style="left:191.80px;top:426.00px;font-size:24px;font-weight:400;color:#000;letter-spacing:-0.333px;">Gong</div>
<div class="t" style="left:100.60px;top:466.00px;font-size:26px;font-weight:700;color:#000;letter-spacing:1.250px;">00327</div>
<div class="t" style="left:190.80px;top:468.00px;font-size:24px;font-weight:400;color:#000;letter-spacing:-0.077px;">Prova segmenti</div>
<div class="t" style="left:100.60px;top:508.00px;font-size:26px;font-weight:700;color:#000;letter-spacing:1.000px;">00328</div>
<div class="t" style="left:190.80px;top:510.00px;font-size:24px;font-weight:400;color:#000;letter-spacing:0.076px;">Immagine test sul display centrale</div>
<div class="t" style="left:100.60px;top:550.00px;font-size:26px;font-weight:700;color:#000;letter-spacing:1.250px;">00532</div>
<div class="t" style="left:190.80px;top:552.00px;font-size:24px;font-weight:400;color:#000;letter-spacing:-0.024px;">Pilotaggio della ventola dell&#x27;alloggiamento</div>
<div class="t" style="left:100.60px;top:592.00px;font-size:26px;font-weight:700;color:#000;letter-spacing:1.250px;">00587</div>
<div class="t" style="left:190.80px;top:594.00px;font-size:24px;font-weight:400;color:#000;letter-spacing:0.000px;">Indicazioni analoghe</div>
<div class="t" style="left:100.60px;top:634.00px;font-size:26px;font-weight:700;color:#000;letter-spacing:1.000px;">00588</div>
<div class="t" style="left:191.80px;top:636.00px;font-size:24px;font-weight:400;color:#000;letter-spacing:-0.533px;">Spie</div>
<div class="t" style="left:100.60px;top:676.00px;font-size:26px;font-weight:700;color:#000;letter-spacing:1.250px;">00589</div>
<div class="t" style="left:190.80px;top:678.00px;font-size:24px;font-weight:400;color:#000;letter-spacing:0.208px;">Illuminazione</div>
<div class="t" style="left:100.60px;top:718.00px;font-size:26px;font-weight:700;color:#000;letter-spacing:1.250px;">00693</div>
<div class="t" style="left:190.80px;top:720.00px;font-size:24px;font-weight:400;color:#000;letter-spacing:0.107px;">Ulteriori funzioni delle luci</div>
<div class="t" style="left:100.60px;top:760.00px;font-size:26px;font-weight:700;color:#000;letter-spacing:1.250px;">00840</div>
<div class="t" style="left:190.80px;top:762.00px;font-size:24px;font-weight:400;color:#000;letter-spacing:-0.100px;">Protezione componenti</div>
<div class="t" style="left:771.50px;top:364.00px;font-size:24px;font-weight:400;color:#000;letter-spacing:0.066px;">Attuatore 00328: Immagine test sul display centrale</div>
<div class="t" style="left:822.00px;top:426.00px;font-size:24px;font-weight:400;color:#0a6e0a;letter-spacing:-0.500px;">Avvio</div>
<div class="t" style="left:770.10px;top:499.00px;font-size:24px;font-weight:400;color:#000;letter-spacing:-0.300px;">Parametro</div>
<div class="t" style="left:1011.00px;top:562.00px;font-size:24px;font-weight:400;color:#000;letter-spacing:-0.250px;">Parametro</div>
<div class="t" style="left:1461.40px;top:562.00px;font-size:24px;font-weight:400;color:#000;letter-spacing:-0.480px;">Valore</div>
<div class="t" style="left:785.30px;top:614.00px;font-size:24px;font-weight:400;color:#000;letter-spacing:0.000px;">1</div>
<div class="t" style="left:784.30px;top:675.00px;font-size:24px;font-weight:400;color:#000;letter-spacing:0.000px;">2</div>
<div class="t" style="left:784.30px;top:735.00px;font-size:24px;font-weight:400;color:#000;letter-spacing:0.000px;">3</div>
<div class="t" style="left:813.50px;top:613.00px;font-size:24px;font-weight:400;color:#000;letter-spacing:-0.054px;">Parametro di controllo ingresso/uscita</div>
<div class="t" style="left:815.40px;top:673.00px;font-size:24px;font-weight:400;color:#000;letter-spacing:-0.107px;">Tempo di comando</div>
<div class="t" style="left:813.50px;top:733.00px;font-size:24px;font-weight:400;color:#000;letter-spacing:0.036px;">Parametri start</div>
<div class="t" style="left:1330.20px;top:613.00px;font-size:24px;font-weight:400;color:#000;letter-spacing:-0.430px;">Comando a breve scadenza</div>
<div class="t" style="left:1331.20px;top:673.00px;font-size:24px;font-weight:400;color:#000;letter-spacing:0.308px;">tempo infinito</div>
<div class="t" style="left:1329.20px;top:733.00px;font-size:24px;font-weight:400;color:#000;letter-spacing:0.125px;">Immagine di prova</div>
<div class="t" style="left:771.80px;top:926.00px;font-size:24px;font-weight:400;color:#000;letter-spacing:-0.153px;">Valori di misura</div>
<div class="t" style="left:815.90px;top:988.00px;font-size:24px;font-weight:400;color:#000;letter-spacing:-0.310px;">Descrizione</div>
<div class="t" style="left:1513.00px;top:988.00px;font-size:24px;font-weight:400;color:#000;letter-spacing:-0.340px;">Valore</div>
<div class="t" style="left:1859.50px;top:988.00px;font-size:24px;font-weight:400;color:#000;letter-spacing:0.075px;">Unità</div>
<div class="t" style="left:705.00px;top:388.00px;font-size:24px;font-weight:400;color:#000;letter-spacing:0.000px;">&lt;</div>
<div class="t" style="left:2465.50px;top:388.00px;font-size:24px;font-weight:400;color:#000;letter-spacing:0.000px;">&lt;</div>
<div class="t" style="left:783.20px;top:1022.00px;font-size:24px;font-weight:400;color:#000;letter-spacing:0.000px;">&gt;</div>
<div class="t" style="left:57.60px;top:1623.00px;font-size:24px;font-weight:400;color:#000;letter-spacing:-0.103px;">Connesso a K+CAN. Adattatore pronto.</div>
</body></html>
